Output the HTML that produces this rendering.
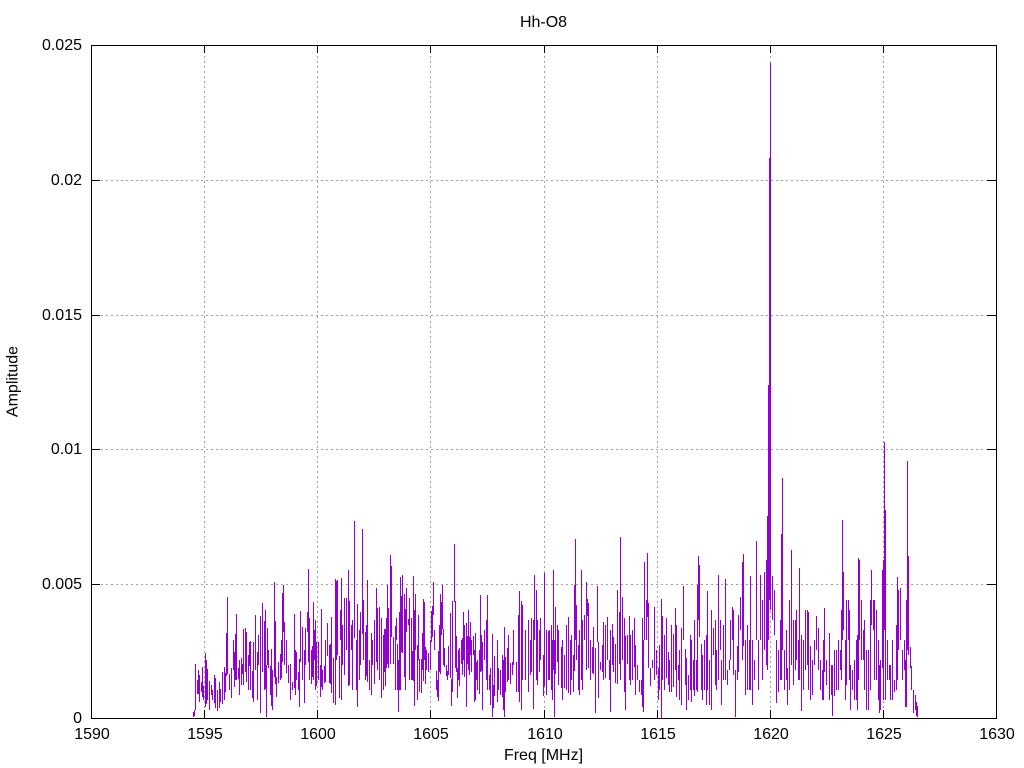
<!DOCTYPE html>
<html><head><meta charset="utf-8"><title>Hh-O8</title>
<style>html,body{margin:0;padding:0;background:#fff}svg{display:block}text{font-family:"Liberation Sans",sans-serif;font-size:16px;fill:#000}</style>
</head><body>
<svg width="1024" height="768" viewBox="0 0 1024 768" xmlns="http://www.w3.org/2000/svg">
<rect width="1024" height="768" fill="#fff"/>
<path shape-rendering="crispEdges" fill="none" stroke="#a0a0a0" stroke-width="1" stroke-dasharray="2 3" d="M204.5 718V45M317.5 718V45M430.5 718V45M544.5 718V45M657.5 718V45M770.5 718V45M883.5 718V45M91 584.5H996M91 449.5H996M91 315.5H996M91 180.5H996"/>
<path shape-rendering="crispEdges" fill="none" stroke="#9400d3" stroke-width="1" d="M193.5 712V717M194.5 710V716M195.5 664V710M197.5 680V694M198.5 670V694M199.5 675V702M201.5 682V692M202.5 667V697M203.5 686V700M205.5 653V707M206.5 660V704M207.5 669V700M209.5 681V710M211.5 685V695M212.5 690V700M214.5 675V703M215.5 678V708M217.5 690V711M219.5 682V708M220.5 689V702M222.5 672V704M224.5 667V700M225.5 673V692M226.5 633V676M227.5 597V674M229.5 674V690M231.5 668V698M233.5 640V670M234.5 652V687M235.5 634V680M236.5 614V680M238.5 668V679M239.5 660V695M241.5 658V685M242.5 664V674M243.5 629V685M245.5 628V672M246.5 632V682M248.5 655V690M249.5 642V666M250.5 641V690M252.5 671V698M253.5 642V702M255.5 615V670M257.5 652V700M258.5 635V665M260.5 616V713M262.5 603V672M264.5 621V690M265.5 610V689M266.5 665V717M267.5 628V665M268.5 650V668M270.5 666V695M271.5 649V706M272.5 670V710M274.5 582V677M275.5 621V684M276.5 677V697M278.5 662V683M280.5 654V680M281.5 640V678M282.5 593V662M283.5 585V632M284.5 622V665M286.5 640V673M288.5 665V683M290.5 664V700M292.5 682V690M294.5 614V688M295.5 650V695M296.5 652V680M298.5 672V690M299.5 659V707M300.5 611V662M302.5 627V680M304.5 650V703M305.5 628V665M307.5 612V632M308.5 569V662M309.5 618V680M311.5 650V684M312.5 646V677M313.5 602V680M314.5 630V660M315.5 620V690M316.5 642V686M318.5 642V680M320.5 665V697M321.5 609V687M322.5 670V690M324.5 666V683M325.5 640V682M327.5 623V656M329.5 645V683M330.5 644V684M331.5 617V693M333.5 658V703M335.5 579V705M336.5 581V660M337.5 580V655M339.5 656V698M340.5 610V640M341.5 578V700M342.5 625V665M344.5 598V675M346.5 598V650M348.5 570V686M349.5 601V685M351.5 625V650M352.5 620V690M354.5 521V638M356.5 640V690M357.5 604V707M359.5 630V680M360.5 612V665M362.5 529V634M363.5 600V660M365.5 632V680M366.5 625V676M367.5 580V682M369.5 660V690M371.5 633V695M372.5 640V665M374.5 620V684M376.5 588V662M377.5 608V670M379.5 607V680M381.5 618V698M383.5 635V690M384.5 629V672M385.5 629V686M386.5 618V668M387.5 585V664M388.5 608V668M390.5 555V664M391.5 566V637M393.5 637V664M395.5 626V690M396.5 618V640M397.5 644V690M398.5 660V712M399.5 612V690M400.5 577V690M401.5 596V652M402.5 575V653M404.5 594V677M405.5 609V690M406.5 588V632M408.5 619V625M409.5 598V680M411.5 618V680M412.5 651V680M413.5 576V681M414.5 610V706M415.5 594V650M417.5 645V700M418.5 615V660M419.5 659V692M421.5 659V693M422.5 633V670M423.5 599V681M424.5 602V660M425.5 647V684M426.5 650V670M428.5 653V672M430.5 640V670M431.5 611V642M432.5 606V637M433.5 582V615M434.5 630V650M436.5 671V690M437.5 680V697M438.5 651V701M439.5 625V672M440.5 594V674M441.5 602V635M442.5 585V629M443.5 629V665M444.5 648V667M446.5 665V676M447.5 671V680M448.5 646V675M450.5 613V678M451.5 679V706M452.5 601V692M454.5 544V602M455.5 601V668M456.5 636V672M457.5 668V698M458.5 650V680M459.5 648V686M461.5 640V664M462.5 638V675M463.5 612V660M464.5 625V677M466.5 623V707M467.5 636V664M468.5 610V670M469.5 637V675M470.5 622V655M471.5 640V672M473.5 636V655M474.5 650V702M475.5 633V700M476.5 662V680M477.5 660V690M479.5 650V694M480.5 595V672M481.5 635V671M482.5 642V710M484.5 630V660M486.5 620V680M487.5 595V690M489.5 675V690M490.5 668V705M492.5 634V717M493.5 685V708M494.5 656V696M497.5 640V702M498.5 668V690M500.5 670V695M502.5 655V697M503.5 660V710M504.5 627V717M505.5 657V692M507.5 648V682M508.5 635V680M510.5 663V684M512.5 662V675M513.5 630V665M516.5 662V692M518.5 615V692M519.5 591V702M521.5 601V710M522.5 605V680M525.5 630V680M528.5 620V692M530.5 640V675M531.5 618V672M533.5 620V709M534.5 575V640M536.5 590V680M537.5 620V685M539.5 630V672M540.5 618V660M543.5 655V696M544.5 573V686M546.5 630V695M548.5 631V680M549.5 630V680M551.5 625V690M552.5 640V700M553.5 570V670M554.5 640V717M555.5 607V674M557.5 625V662M558.5 630V685M561.5 647V688M562.5 640V700M564.5 655V688M566.5 625V690M568.5 617V693M570.5 640V695M571.5 635V680M573.5 655V692M574.5 585V671M575.5 539V640M576.5 605V660M578.5 645V690M579.5 630V695M581.5 570V680M582.5 620V690M584.5 615V640M586.5 582V670M587.5 599V616M588.5 603V668M590.5 640V680M592.5 647V673M593.5 627V674M595.5 648V713M597.5 586V642M598.5 642V698M600.5 662V670M602.5 645V672M603.5 622V680M605.5 625V678M607.5 617V660M609.5 660V680M610.5 630V712M612.5 624V665M613.5 637V672M615.5 644V683M617.5 590V684M619.5 612V664M620.5 537V680M622.5 597V660M624.5 618V692M625.5 636V710M627.5 635V664M629.5 616V680M630.5 635V685M632.5 630V680M634.5 618V667M635.5 645V695M637.5 665V680M639.5 680V692M641.5 680V695M642.5 618V707M643.5 640V712M644.5 562V640M646.5 600V640M647.5 553V617M648.5 603V668M650.5 668V686M652.5 660V668M654.5 607V680M656.5 650V675M658.5 668V700M659.5 645V690M661.5 599V719M662.5 616V680M664.5 635V690M666.5 618V678M668.5 652V685M669.5 660V692M671.5 625V692M673.5 634V687M675.5 608V670M676.5 625V697M678.5 665V680M679.5 650V700M681.5 628V705M683.5 586V640M685.5 649V685M686.5 658V710M688.5 675V700M690.5 635V690M691.5 640V702M693.5 660V690M694.5 620V696M696.5 660V690M697.5 585V692M698.5 556V620M699.5 565V637M701.5 644V690M702.5 655V700M704.5 640V690M706.5 635V705M707.5 591V690M709.5 660V705M711.5 610V710M713.5 628V655M715.5 620V685M716.5 650V690M718.5 575V680M720.5 620V650M721.5 660V705M723.5 625V680M725.5 579V680M727.5 670V685M729.5 660V670M730.5 620V660M732.5 607V640M733.5 610V675M735.5 670V717M737.5 646V680M738.5 615V672M740.5 597V630M742.5 562V660M743.5 554V646M745.5 640V695M747.5 625V690M749.5 640V690M750.5 576V690M752.5 640V705M754.5 660V680M756.5 541V640M758.5 640V690M760.5 575V640M762.5 600V680M764.5 572V650M766.5 560V665M767.5 516V670M768.5 385V640M769.5 158V600M770.5 63V610M772.5 576V620M774.5 590V635M776.5 640V703M778.5 650V692M780.5 620V680M781.5 534V680M782.5 478V650M784.5 650V690M786.5 630V680M787.5 668V705M789.5 600V690M791.5 550V665M793.5 620V685M795.5 620V670M796.5 610V660M798.5 640V680M799.5 568V680M801.5 635V711M803.5 640V690M805.5 610V670M807.5 610V665M808.5 612V690M810.5 646V700M812.5 660V695M814.5 640V665M816.5 616V650M818.5 628V670M820.5 660V690M822.5 670V700M823.5 640V700M824.5 608V672M826.5 660V685M829.5 633V700M831.5 665V695M832.5 665V716M834.5 650V696M836.5 650V690M838.5 640V690M840.5 650V670M841.5 610V680M842.5 520V640M843.5 572V630M845.5 640V700M846.5 600V685M848.5 600V640M849.5 610V680M850.5 665V710M852.5 670V690M854.5 660V700M856.5 640V700M857.5 635V710M858.5 558V680M859.5 560V640M861.5 600V660M863.5 630V660M864.5 620V690M866.5 650V710M868.5 650V710M870.5 600V690M871.5 570V625M873.5 600V630M874.5 600V680M876.5 610V680M878.5 640V700M879.5 665V713M880.5 660V710M882.5 570V668M883.5 560V700M884.5 442V630M885.5 510V700M887.5 640V680M889.5 665V680M890.5 665V700M892.5 640V700M894.5 680V692M896.5 625V690M897.5 577V680M898.5 590V650M900.5 588V640M902.5 650V680M904.5 640V670M905.5 660V707M906.5 600V707M907.5 461V650M908.5 556V655M910.5 647V668M911.5 666V690M913.5 690V713M915.5 695V710M916.5 702V716M917.5 706V717"/>
<path shape-rendering="crispEdges" fill="none" stroke="#000" stroke-width="1" d="M91.5 45.5H996.5V718.5H91.5ZM204.5 718V710M317.5 718V710M430.5 718V710M544.5 718V710M657.5 718V710M770.5 718V710M883.5 718V710M204.5 45V53M317.5 45V53M430.5 45V53M544.5 45V53M657.5 45V53M770.5 45V53M883.5 45V53M91 584.5H100M91 449.5H100M91 315.5H100M91 180.5H100M996 584.5H987M996 449.5H987M996 315.5H987M996 180.5H987"/>
<g text-anchor="end">
<text x="82" y="50">0.025</text><text x="82" y="185">0.02</text><text x="82" y="320">0.015</text><text x="82" y="454">0.01</text><text x="82" y="589">0.005</text><text x="82" y="723">0</text>
</g>
<g text-anchor="middle">
<text x="92" y="739">1590</text><text x="205" y="739">1595</text><text x="318" y="739">1600</text><text x="431" y="739">1605</text><text x="545" y="739">1610</text><text x="658" y="739">1615</text><text x="771" y="739">1620</text><text x="884" y="739">1625</text><text x="997" y="739">1630</text>
<text x="543.5" y="27">Hh-O8</text>
<text x="543.5" y="760">Freq [MHz]</text>
<text transform="translate(17.5 381.5) rotate(-90)">Amplitude</text>
</g>
</svg>
</body></html>
